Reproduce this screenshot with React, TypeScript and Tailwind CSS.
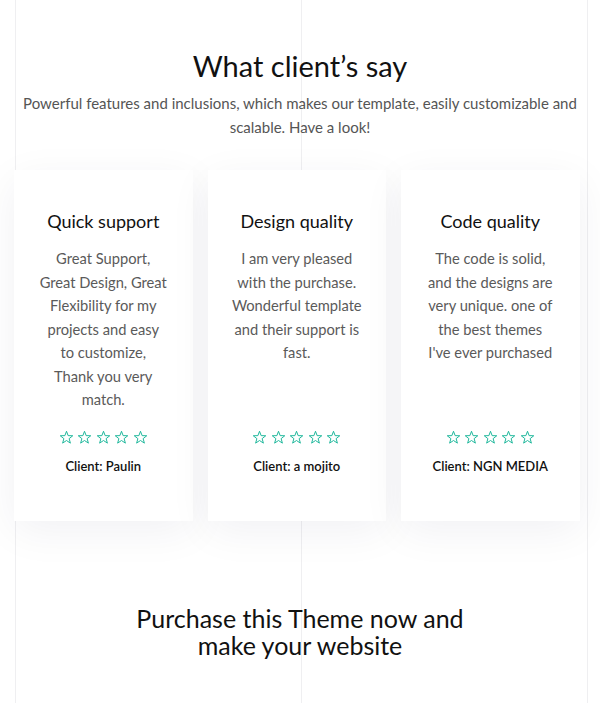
import React from "react";

const cards = [
  {
    title: "Quick support",
    lines: ["Great Support,", "Great Design, Great", "Flexibility for my", "projects and easy", "to customize,", "Thank you very", "match."],
    client: "Client: Paulin",
  },
  {
    title: "Design quality",
    lines: ["I am very pleased", "with the purchase.", "Wonderful template", "and their support is", "fast."],
    client: "Client: a mojito",
  },
  {
    title: "Code quality",
    lines: ["The code is solid,", "and the designs are", "very unique. one of", "the best themes", "I've ever purchased"],
    client: "Client: NGN MEDIA",
  },
];

function Star() {
  return (
    <svg width="15" height="15" viewBox="0 0 24 24" fill="none" stroke="#1fb89c" strokeWidth="1.6" strokeLinejoin="miter">
      <polygon points="12,2 14.6,9 22,9.2 16.2,13.8 18.2,21 12,16.8 5.8,21 7.8,13.8 2,9.2 9.4,9" />
    </svg>
  );
}

export default function App() {
  return (
    <div className="relative w-full h-[703px] overflow-hidden bg-white" style={{ fontFamily: "Lato, 'Liberation Sans', sans-serif" }}>
      {/* background grid lines */}
      <div className="absolute top-0 bottom-0 left-[15px] w-px bg-[#efeff1]" />
      <div className="absolute top-0 bottom-0 left-[301px] w-px bg-[#efeff1]" />
      <div className="absolute top-0 bottom-0 left-[587px] w-px bg-[#efeff1]" />

      <div className="relative flex flex-col items-center">
        <h2 className="mt-[48px] text-[29px] leading-[36px] text-[#111]">What client’s say</h2>
        <p className="mt-[7px] text-[15px] leading-[24px] text-[#555] text-center w-[560px]">
          Powerful features and inclusions, which makes our template, easily customizable and scalable. Have a look!
        </p>

        <div className="mt-[31px] flex gap-[15px] pl-[14px] w-full">
          {cards.map((c) => (
            <div
              key={c.title}
              className="w-[178.5px] h-[351px] bg-white shadow-[0_10px_40px_rgba(20,20,60,0.06)] flex flex-col items-center pt-[37px]"
            >
              <h3 className="text-[18px] leading-[28px] text-[#111]">{c.title}</h3>
              <div className="mt-[12px] h-[176px] flex flex-col items-center text-[14.7px] leading-[23.5px] text-[#5a5a5a]">
                {c.lines.map((l) => (
                  <span key={l} className="whitespace-nowrap">{l}</span>
                ))}
              </div>
              <div className="mt-[7px] flex gap-[3.5px]">
                {[0, 1, 2, 3, 4].map((i) => (
                  <Star key={i} />
                ))}
              </div>
              <div className="mt-[12px] text-[13px] leading-[18px] font-semibold text-[#111]">{c.client}</div>
            </div>
          ))}
        </div>

        <h2 className="mt-[84px] text-[25px] leading-[27px] text-[#111] text-center">
          <span className="block">Purchase this Theme now and</span>
          <span className="block">make your website</span>
        </h2>
      </div>
    </div>
  );
}
